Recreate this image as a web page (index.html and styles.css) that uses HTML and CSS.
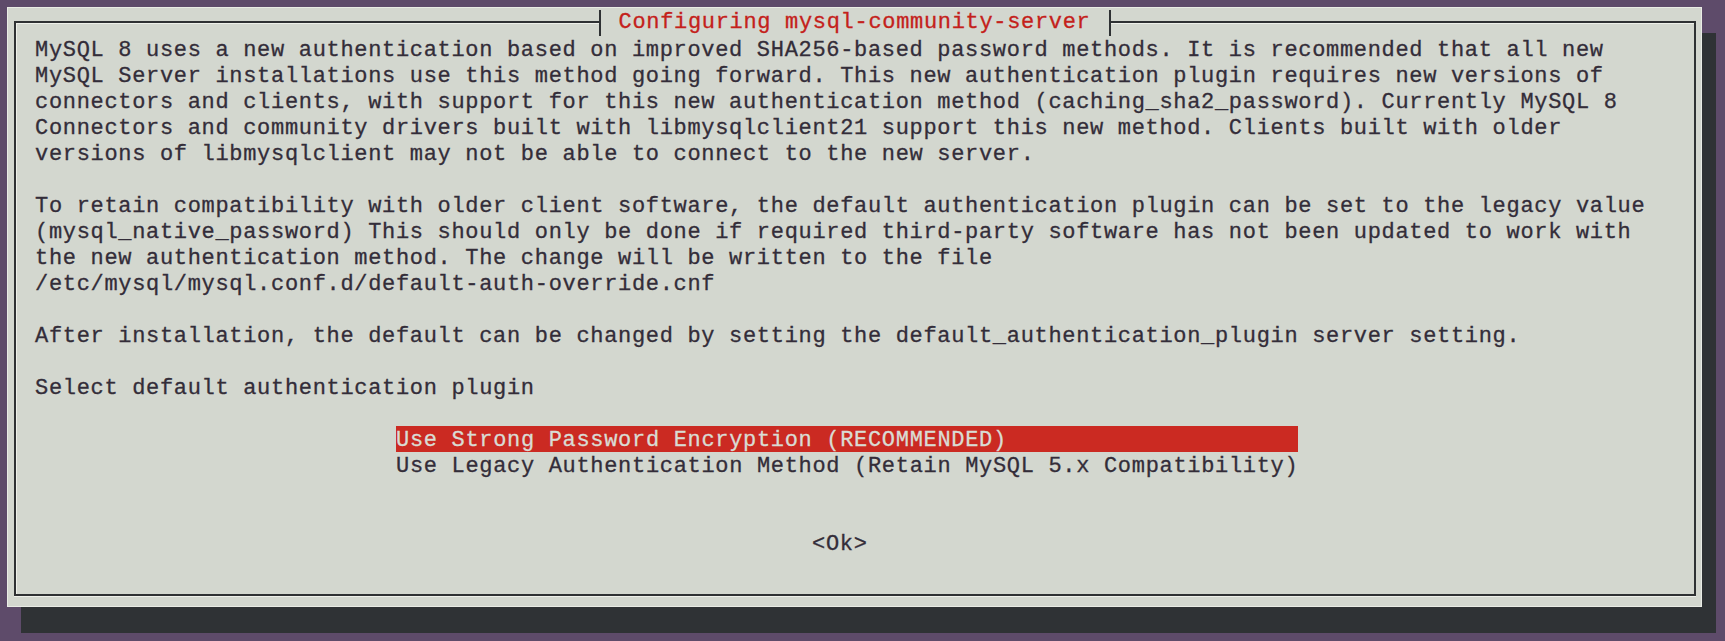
FILE: index.html
```html
<!DOCTYPE html>
<html lang="en">
<head>
<meta charset="utf-8">
<title>Configuring mysql-community-server</title>
<link rel="stylesheet" href="styles.css">
</head>
<body>
<div class="screen">
  <div class="dialog">
    <div class="title-row"><span class="title">Configuring mysql-community-server</span></div>
    <div class="frame">
      <div class="line">MySQL 8 uses a new authentication based on improved SHA256-based password methods. It is recommended that all new</div>
      <div class="line">MySQL Server installations use this method going forward. This new authentication plugin requires new versions of</div>
      <div class="line">connectors and clients, with support for this new authentication method (caching_sha2_password). Currently MySQL 8</div>
      <div class="line">Connectors and community drivers built with libmysqlclient21 support this new method. Clients built with older</div>
      <div class="line">versions of libmysqlclient may not be able to connect to the new server.</div>
      <div class="line"> </div>
      <div class="line">To retain compatibility with older client software, the default authentication plugin can be set to the legacy value</div>
      <div class="line">(mysql_native_password) This should only be done if required third-party software has not been updated to work with</div>
      <div class="line">the new authentication method. The change will be written to the file</div>
      <div class="line">/etc/mysql/mysql.conf.d/default-auth-override.cnf</div>
      <div class="line"> </div>
      <div class="line">After installation, the default can be changed by setting the default_authentication_plugin server setting.</div>
      <div class="line"> </div>
      <div class="line">Select default authentication plugin</div>
      <div class="line"> </div>
      <div class="menu">
        <div class="line item selected">Use Strong Password Encryption (RECOMMENDED)</div>
        <div class="line item">Use Legacy Authentication Method (Retain MySQL 5.x Compatibility)</div>
      </div>
      <div class="buttons">
        <div class="line ok">&lt;Ok&gt;</div>
      </div>
    </div>
  </div>
</div>
</body>
</html>
```
FILE: styles.css
```css
html, body {
  margin: 0;
  padding: 0;
}

body {
  width: 1725px;
  height: 641px;
  overflow: hidden;
  background: #5e4b6a;
  font-family: "Liberation Mono", "DejaVu Sans Mono", monospace;
}

.screen {
  padding: 7px 0 0 7px;
}

.dialog {
  position: relative;
  box-sizing: border-box;
  width: 1695px;
  height: 600px;
  padding: 13px 5px 0 6px;
  background: #d3d7cf;
  border: 1px solid #e9ece5;
  box-shadow: 14px 26px 0 0 #2f3235;
}

.frame {
  box-sizing: border-box;
  height: 575px;
  padding: 13px 0 0 19px;
  border: 2px solid #2e3133;
  box-shadow: inset 1px 1px 0 #eef0ea, 0 1px 0 #eef0ea;
}

.line {
  box-sizing: border-box;
  height: 26px;
  padding-top: 4px;
  line-height: 22px;
  white-space: pre;
  font-size: 22px;
  letter-spacing: 0.68px;
  color: #332d39;
  -webkit-text-stroke: 0.3px currentColor;
}

.menu {
  margin-left: 361px;
}

.item {
  width: 902px;
}

.item.selected {
  background: #cb2a22;
  color: #d9dcd4;
}

.buttons {
  margin-top: 52px;
}

.ok {
  margin-left: 777px;
}

.title-row {
  position: absolute;
  top: 2px;
  left: 0;
  right: 0;
  display: flex;
  justify-content: center;
}

.title {
  height: 26px;
  line-height: 26px;
  padding: 0 18px;
  background: #d3d7cf;
  border-left: 2px solid #2e3133;
  border-right: 2px solid #2e3133;
  font-size: 22px;
  letter-spacing: 0.68px;
  color: #c4211b;
  white-space: pre;
  -webkit-text-stroke: 0.3px currentColor;
}
```
